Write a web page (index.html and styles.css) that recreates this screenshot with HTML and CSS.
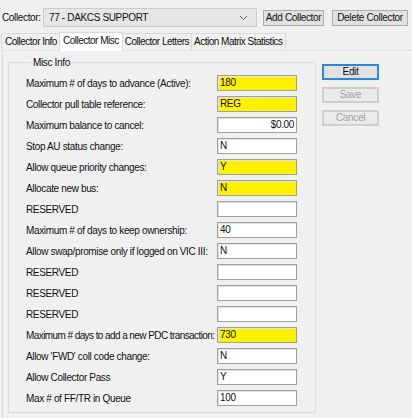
FILE: index.html
```html
<!DOCTYPE html>
<html lang="en">
<head>
    <meta charset="UTF-8">
    <title>Collector Maintenance</title>
    <link rel="stylesheet" href="styles.css">
</head>
<body>
    <div class="toolbar">
        <span class="toolbar-label">Collector:</span>
        <div class="combo">
            <span>77 - DAKCS SUPPORT</span>
            <svg class="chevron" width="9" height="6" viewBox="0 0 9 6">
                <path d="M1 1 L4.5 4.5 L8 1" fill="none" stroke="#606060" stroke-width="1"/>
            </svg>
        </div>
        <button class="btn btn-add">Add Collector</button>
        <button class="btn btn-delete">Delete Collector</button>
    </div>

    <div class="tabs">
        <div class="tab">Collector Info</div>
        <div class="tab active">Collector Misc</div>
        <div class="tab">Collector Letters</div>
        <div class="tab">Action Matrix Statistics</div>
    </div>

    <div class="tab-page">
        <fieldset class="group">
            <legend>Misc Info</legend>
            <div class="row"><label>Maximum # of days to advance (Active):</label><div class="field hl">180</div></div>
            <div class="row"><label>Collector pull table reference:</label><div class="field hl">REG</div></div>
            <div class="row"><label>Maximum balance to cancel:</label><div class="field num">$0.00</div></div>
            <div class="row"><label>Stop AU status change:</label><div class="field">N</div></div>
            <div class="row"><label>Allow queue priority changes:</label><div class="field hl">Y</div></div>
            <div class="row"><label>Allocate new bus:</label><div class="field hl">N</div></div>
            <div class="row"><label>RESERVED</label><div class="field"></div></div>
            <div class="row"><label>Maximum # of days to keep ownership:</label><div class="field">40</div></div>
            <div class="row"><label>Allow swap/promise only if logged on VIC III:</label><div class="field">N</div></div>
            <div class="row"><label>RESERVED</label><div class="field"></div></div>
            <div class="row"><label>RESERVED</label><div class="field"></div></div>
            <div class="row"><label>RESERVED</label><div class="field"></div></div>
            <div class="row"><label class="tight">Maximum # days to add a new PDC transaction:</label><div class="field hl">730</div></div>
            <div class="row"><label>Allow 'FWD' coll code change:</label><div class="field">N</div></div>
            <div class="row"><label>Allow Collector Pass</label><div class="field">Y</div></div>
            <div class="row"><label>Max # of FF/TR in Queue</label><div class="field">100</div></div>
        </fieldset>

        <div class="actions">
            <button class="btn btn-edit">Edit</button>
            <button class="btn btn-off" disabled>Save</button>
            <button class="btn btn-off" disabled>Cancel</button>
        </div>
    </div>
</body>
</html>
```

FILE: styles.css
```css
* {
    margin: 0;
    padding: 0;
    box-sizing: border-box;
}

body {
    font-family: 'Liberation Sans', Arial, sans-serif;
    font-size: 10px;
    letter-spacing: -0.35px;
    color: #111;
    background: #f0f0f0;
    width: 412px;
    height: 418px;
    overflow: hidden;
}

/* top collector selector */
.toolbar {
    display: flex;
    align-items: center;
    height: 19px;
    margin-top: 8px;
    padding-left: 2px;
}

.toolbar-label {
    width: 41px;
}

.combo {
    display: flex;
    align-items: center;
    justify-content: space-between;
    width: 214px;
    height: 19px;
    padding: 0 8px 0 5px;
    background: #e6e6e6;
    border: 1px solid #cccccc;
}

.chevron {
    margin-top: 1px;
}

.btn {
    font-family: inherit;
    font-size: 10px;
    letter-spacing: -0.35px;
    color: #111;
    background: #e1e1e1;
    border: 1px solid #adadad;
    height: 16px;
    line-height: 14px;
    white-space: nowrap;
}

.btn-add {
    width: 61px;
    margin-left: 6px;
}

.btn-delete {
    width: 76px;
    margin-left: 8px;
}

/* tab strip */
.tabs {
    display: flex;
    align-items: flex-end;
    height: 18px;
    margin-top: 5px;
    padding-left: 1px;
    letter-spacing: -0.5px;
}

.tab {
    height: 17px;
    line-height: 15px;
    padding: 0 2px;
    border: 1px solid #d9d9d9;
    border-bottom: none;
    border-right: none;
    background: #f0f0f0;
}

.tab:first-child {
    padding-left: 3px;
}

.tab:last-child {
    border-right: 1px solid #d9d9d9;
}

.tab.active {
    height: 19px;
    line-height: 16px;
    padding: 0 3px;
    background: #fff;
    border-right: 1px solid #d9d9d9;
    margin-bottom: -1px;
    position: relative;
}

.tab.active + .tab {
    border-left: none;
}

.tab-page {
    display: flex;
    align-items: flex-start;
    height: 368px;
    margin-left: 2px;
    border-top: 1px solid #e3e3e3;
    border-left: 1px solid #dadada;
}

/* group box */
.group {
    width: 308px;
    margin: 5px 0 0 5px;
    padding: 6px 0 1px 17px;
    border: 1px solid #dcdcdc;
}

.group legend {
    margin-left: 5px;
    padding: 0 2px;
    line-height: 13px;
}

.row {
    display: flex;
    align-items: center;
    height: 16px;
    margin-bottom: 5px;
}

.row label {
    width: 191px;
    white-space: nowrap;
}

.row label.tight {
    letter-spacing: -0.58px;
}

.field {
    width: 80px;
    height: 16px;
    line-height: 14px;
    padding: 0 2px;
    background: #fff;
    border: 1px solid #a0a0a0;
    box-shadow: inset 1px 1px 0 #e3e3e3;
}

.field.hl {
    background: #fff200;
}

.field.num {
    text-align: right;
}

/* edit / save / cancel */
.actions {
    display: flex;
    flex-direction: column;
    gap: 7px;
    margin: 13px 0 0 6px;
}

.btn-edit,
.btn-off {
    width: 57px;
}

.btn-edit {
    border: 2px solid #2f86d6;
    line-height: 12px;
}

.btn-off {
    color: #a3a3a3;
    background: #eaeaea;
    border: 2px solid #cfcfcf;
    line-height: 12px;
}
```
